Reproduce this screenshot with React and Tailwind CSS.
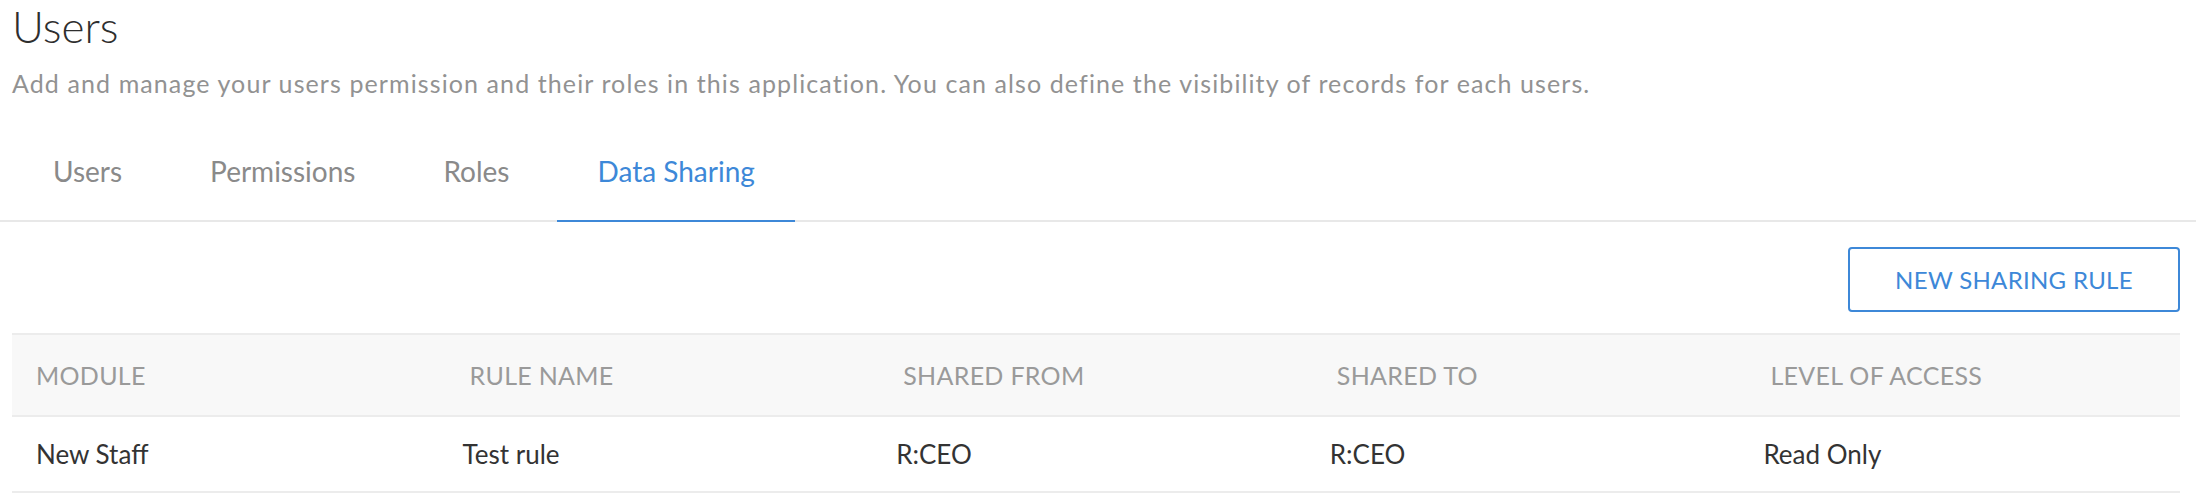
import React, { useState } from 'react';

const TABS = ['Users', 'Permissions', 'Roles', 'Data Sharing'];

const COLUMNS = ['MODULE', 'RULE NAME', 'SHARED FROM', 'SHARED TO', 'LEVEL OF ACCESS'];

const RULES = [
  { module: 'New Staff', name: 'Test rule', from: 'R:CEO', to: 'R:CEO', access: 'Read Only' },
];

const App = () => {
  const [activeTab, setActiveTab] = useState('Data Sharing');

  return (
    <div className="w-full h-[500px] bg-white overflow-hidden" style={{ fontFamily: 'Lato, "Liberation Sans", sans-serif' }}>
      {/* --- PAGE HEADER --- */}
      <div className="pl-[12px]">
        <h1 className="text-[44px] leading-[1.2] font-light text-[#2e2e2e]">Users</h1>
        <p className="mt-[15px] text-[25px] leading-[1.2] tracking-[1.1px] text-[#929292]">
          Add and manage your users permission and their roles in this application. You can also define the visibility of records for each users.
        </p>
      </div>

      {/* --- TABS --- */}
      <div className="mt-[26px] flex gap-[8px] pl-[13px] border-b-2 border-[#e8e8e8]">
        {TABS.map((tab) => (
          <button
            key={tab}
            onClick={() => setActiveTab(tab)}
            className={`px-[40px] pt-[31px] pb-[32px] -mb-[2px] text-[28px] leading-[1.2] border-b-2 ${
              activeTab === tab ? 'text-[#3d88d8] border-[#3d88d8]' : 'text-[#8a8a8a] border-transparent'
            }`}
          >
            {tab}
          </button>
        ))}
      </div>

      {/* --- CONTENT --- */}
      <div className="pl-[12px] pr-[16px]">
        <div className="flex justify-end mt-[25px]">
          <button className="w-[332px] h-[65px] border-2 border-[#3d88d8] rounded-[4px] text-[24px] text-[#3d88d8] tracking-[0.3px]">
            NEW SHARING RULE
          </button>
        </div>

        <div className="mt-[21px] border-t-2 border-[#ececec]">
          <div className="grid grid-cols-5 h-[82px] items-center bg-[#f8f8f8] border-b-2 border-[#ececec]">
            {COLUMNS.map((col) => (
              <div key={col} className="pl-[24px] text-[25px] tracking-[0.3px] text-[#9a9a9a]">{col}</div>
            ))}
          </div>
          {RULES.map((r) => (
            <div key={r.name} className="grid grid-cols-5 h-[76px] items-center border-b-2 border-[#ececec] text-[26px] text-[#333333]">
              <div className="pl-[24px]">{r.module}</div>
              <div className="pl-[17px]">{r.name}</div>
              <div className="pl-[17px]">{r.from}</div>
              <div className="pl-[17px]">{r.to}</div>
              <div className="pl-[17px]">{r.access}</div>
            </div>
          ))}
        </div>
      </div>
    </div>
  );
};

export default App;
